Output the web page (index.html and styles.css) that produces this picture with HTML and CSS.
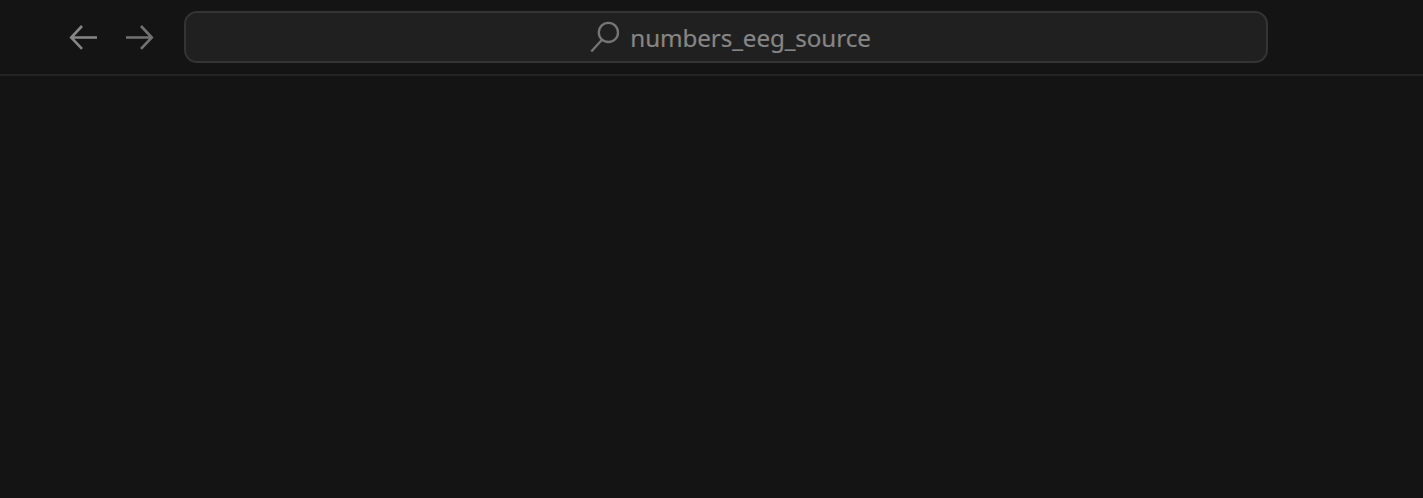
FILE: index.html
```html
<!DOCTYPE html>
<html lang="en">
<head>
<meta charset="utf-8">
<title>numbers_eeg_source</title>
<link rel="stylesheet" href="styles.css">
</head>
<body>
<header class="titlebar">
  <nav class="history">
    <button class="nav-button" aria-label="Go back">
      <svg class="arrow" viewBox="0 0 28 26"><path d="M28 13.5H2.5M13 2L2.2 13.5L13 24.8"/></svg>
    </button>
    <button class="nav-button nav-forward" aria-label="Go forward">
      <svg class="arrow" viewBox="0 0 28 26"><path d="M1 13.5H26M16 2L26.8 13.5L16 24.8"/></svg>
    </button>
  </nav>
  <button class="command-center">
    <svg class="search-icon" viewBox="0 0 30 32"><circle cx="18.4" cy="11.4" r="9.6"/><path d="M12 18.8L1.3 30.5"/></svg>
    <span class="label">numbers_eeg_source</span>
  </button>
</header>
<main class="workspace"></main>
</body>
</html>
```
FILE: styles.css
```css
* { box-sizing: border-box; }
body {
  margin: 0;
  height: 100vh;
  display: flex;
  flex-direction: column;
  overflow: hidden;
  background: #141414;
  font-family: "Noto Sans", "Open Sans", sans-serif;
}
button { padding: 0; border: 0; background: none; font: inherit; }
.titlebar {
  display: flex;
  align-items: flex-start;
  height: 76px;
  padding: 11px 0 0 69px;
  border-bottom: 2px solid #232323;
}
.history { display: flex; gap: 28px; width: 115px; height: 52px; align-items: center; }
.nav-button { width: 28px; height: 26px; color: #868686; }
.nav-forward { color: #727272; }
.arrow, .search-icon { display: block; fill: none; stroke: currentColor; }
.arrow { width: 28px; height: 26px; stroke-width: 2.6; overflow: visible; }
.command-center {
  display: flex;
  align-items: center;
  justify-content: center;
  gap: 10px;
  width: 1084px;
  height: 52px;
  padding-right: 7px;
  padding-left: 16px;
  border: 2px solid #343434;
  border-radius: 13px;
  background: #202020;
  color: #868686;
}
.search-icon { width: 30px; height: 32px; stroke-width: 2.3; color: #767676; }
.label {
  padding-top: 1px;
  font-size: 24.2px;
  line-height: 36px;
  letter-spacing: -0.1px;
  -webkit-text-stroke: 0.2px currentColor;
}
.workspace { flex: 1; }
```
